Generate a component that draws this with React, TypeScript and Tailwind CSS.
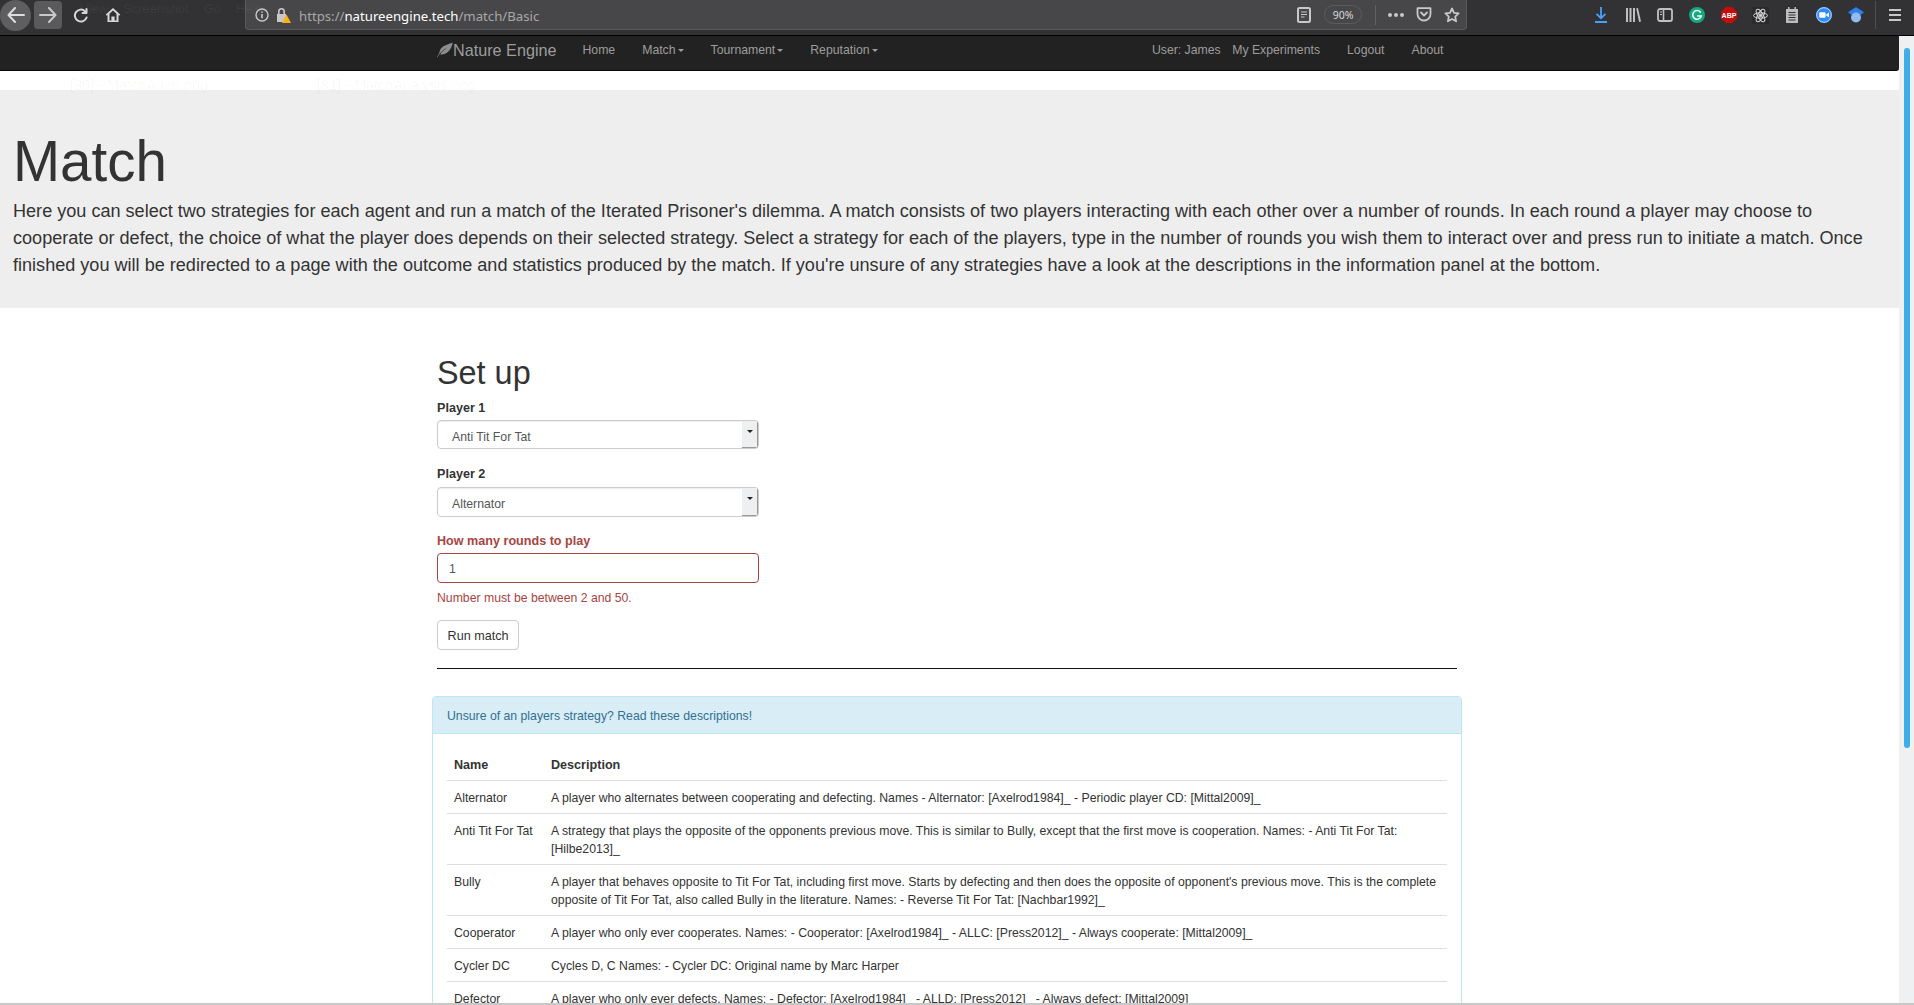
const rows = [
  ['Alternator', 'A player who alternates between cooperating and defecting. Names - Alternator: [Axelrod1984]_ - Periodic player CD: [Mittal2009]_'],
  ['Anti Tit For Tat', 'A strategy that plays the opposite of the opponents previous move. This is similar to Bully, except that the first move is cooperation. Names: - Anti Tit For Tat: [Hilbe2013]_'],
  ['Bully', "A player that behaves opposite to Tit For Tat, including first move. Starts by defecting and then does the opposite of opponent's previous move. This is the complete opposite of Tit For Tat, also called Bully in the literature. Names: - Reverse Tit For Tat: [Nachbar1992]_"],
  ['Cooperator', 'A player who only ever cooperates. Names: - Cooperator: [Axelrod1984]_ - ALLC: [Press2012]_ - Always cooperate: [Mittal2009]_'],
  ['Cycler DC', 'Cycles D, C Names: - Cycler DC: Original name by Marc Harper'],
  ['Defector', 'A player who only ever defects. Names: - Defector: [Axelrod1984]_ - ALLD: [Press2012]_ - Always defect: [Mittal2009]_'],
];

function Caret({ className = '' }: { className?: string }) {
  return <span className={`inline-block w-0 h-0 border-x-[3.5px] border-x-transparent border-t-[3.5px] ${className}`} />;
}

function FakeSelect({ value, height, pad }: { value: string; height: string; pad: string }) {
  return (
    <div className={`w-[322px] ${height} flex items-stretch bg-white border border-[#ccc] rounded-[4px] overflow-hidden shadow-[inset_0_1px_1px_rgba(0,0,0,0.075)]`}>
      <div className={`flex-1 flex items-center pl-[14px] ${pad} text-[#555]`}>{value}</div>
      <div className="w-[16px] flex items-center justify-center bg-[#eeeff1] border-r border-b border-[#999]">
        <Caret className="border-t-[#222] mb-[6px]" />
      </div>
    </div>
  );
}

function NavLink({ children, caret }: { children: string; caret?: boolean }) {
  return (
    <span className="px-[13.5px] flex items-center gap-[2px] text-[#9d9d9d]">
      {children}
      {caret && <Caret className="border-t-[#9d9d9d] mt-[1px]" />}
    </span>
  );
}

export default function App() {
  return (
    <div className="relative h-[1005px] w-[1914px] overflow-hidden flex flex-col bg-white text-[12.25px] leading-[18px] text-[#333] font-['Liberation_Sans',Arial,sans-serif]">
      {/* firefox toolbar */}
      <div className="h-[36px] shrink-0 flex items-start bg-[#323234] border-b border-black relative">
        {/* window menu showing through */}
        <div className="absolute left-[80px] top-0 flex gap-[15px] text-[13px] text-white/[0.06] pointer-events-none">
          <span>View</span>
          <span>Screenshot</span>
          <span>Go</span>
          <span>Help</span>
        </div>
        <div className="flex items-center h-[30px] w-[245px] shrink-0 text-[#d6d6d8]">
          <div className="w-[31px] h-[31px] rounded-full bg-[#5e5e60] flex items-center justify-center">
            <svg width="18" height="16" viewBox="0 0 18 16" fill="none" stroke="#dcdcde" strokeWidth="2" strokeLinecap="round" strokeLinejoin="round"><path d="M8 1 1.5 8 8 15M2 8h15" /></svg>
          </div>
          <div className="ml-[3px] w-[28px] h-[28px] rounded-[4px] bg-[#5a5a5c] flex items-center justify-center">
            <svg width="18" height="16" viewBox="0 0 18 16" fill="none" stroke="#c8c8ca" strokeWidth="2" strokeLinecap="round" strokeLinejoin="round"><path d="M10 1l6.5 7L10 15M16 8H1" /></svg>
          </div>
          <svg width="16" height="15" viewBox="0 0 16 15" fill="none" stroke="#d6d6d8" strokeWidth="2" strokeLinecap="round" className="ml-[11px]">
            <path d="M13.6 9.5A6 6 0 1 1 12 3.2" />
            <path d="M13.5 1v4h-4" strokeLinejoin="round" />
          </svg>
          <svg width="16" height="16" viewBox="0 0 16 16" className="ml-[16px]">
            <path d="M8 1 .8 7.6l1 1.1L2.5 8v7h11V8l.7.7 1-1.1L8 1Zm-3.5 5.8L8 3.6l3.5 3.2V13.4H9.6V9.6H6.4v3.8H4.5V6.8Z" fill="#d6d6d8" />
          </svg>
        </div>
        <div className="w-[1222px] h-[30px] shrink-0 flex items-center bg-[#474749] rounded-b-[4px] border border-t-0 border-[#5a5a5c] text-[#d0d0d2]">
          <svg width="14" height="14" viewBox="0 0 14 14" fill="none" stroke="#c8c8ca" className="ml-[9px]">
            <circle cx="7" cy="7" r="6" strokeWidth="1.4" />
            <path d="M7 6v4.2M7 3.4v1.4" strokeWidth="1.6" />
          </svg>
          <svg width="15" height="16" viewBox="0 0 15 16" className="ml-[7px]">
            <path d="M2 7V4.5a3.5 3.5 0 0 1 7 0V7h1v8H1V7h1Zm1.6 0h3.8V4.5a1.9 1.9 0 0 0-3.8 0V7Z" fill="#c8c8ca" />
            <path d="M10.5 7.5 15 16H6l4.5-8.5Z" fill="#f9b21a" />
          </svg>
          <span className="ml-[8px] pt-[2px] text-[13.2px] font-['Noto_Sans',sans-serif] text-[#a8a8aa]">
            https://<span className="text-white">natureengine.tech</span>/match/Basic
          </span>
          <div className="flex-1" />
          <svg width="14" height="16" viewBox="0 0 14 16" fill="none" stroke="#c8c8ca">
            <rect x="1" y="1" width="12" height="14" rx="1.5" strokeWidth="2" />
            <path d="M4 5h6M4 7.5h6M4 10h3.5" strokeWidth="1.2" />
          </svg>
          <span className="ml-[13px] w-[38px] h-[19px] rounded-full border border-[#5c5c5e] flex items-center justify-center text-[10.5px] font-['Noto_Sans',sans-serif] text-[#d8d8da]">90%</span>
          <span className="ml-[13px] w-px h-[20px] bg-[#626264]" />
          <svg width="16" height="4" viewBox="0 0 16 4" fill="#c8c8ca" className="ml-[12px]">
            <circle cx="2" cy="2" r="2" /><circle cx="8" cy="2" r="2" /><circle cx="14" cy="2" r="2" />
          </svg>
          <svg width="16" height="15" viewBox="0 0 16 15" fill="none" stroke="#c8c8ca" strokeWidth="1.8" strokeLinecap="round" strokeLinejoin="round" className="ml-[12px]">
            <path d="M1.5 1.2h13V7a6.5 6.5 0 0 1-13 0V1.2Z" />
            <path d="M5 5.500l3 3 3-3" />
          </svg>
          <svg width="16" height="16" viewBox="0 0 16 16" fill="none" stroke="#c8c8ca" strokeWidth="1.8" strokeLinejoin="round" className="ml-[12px] mr-[6px]">
            <path d="M8 1.5l2 4.3 4.6.6-3.4 3.2.9 4.7L8 12l-4.1 2.3.9-4.7-3.4-3.2 4.6-.6L8 1.5Z" />
          </svg>
        </div>
        <div className="flex-1 h-[30px] flex items-center text-[#d0d0d2] pl-[128px]">
          <svg width="12" height="16" viewBox="0 0 12 16" fill="none" stroke="#45a1ff" strokeWidth="1.8">
            <path d="M6 0v11M1.500 6.800 6 11.200l4.500-4.400" /><path d="M0 15h12" strokeWidth="2" />
          </svg>
          <svg width="15" height="14" viewBox="0 0 15 14" fill="#c0c0c2" className="ml-[19px]">
            <rect x="0" y="0" width="2" height="14" /><rect x="3.5" y="0" width="2" height="14" /><rect x="7" y="0" width="2" height="14" />
            <path d="M10.2.5 12 0l3 13.5-1.9.5L10.2.5Z" />
          </svg>
          <svg width="16" height="14" viewBox="0 0 16 14" fill="none" stroke="#c0c0c2" className="ml-[16px]">
            <rect x="1" y="1" width="14" height="12" rx="2" strokeWidth="1.8" />
            <path d="M6.500 1v12" strokeWidth="1.6" /><path d="M3 4h2M3 6.500h2" strokeWidth="1" />
          </svg>
          <svg width="16" height="16" viewBox="0 0 16 16" fill="none" className="ml-[16px]">
            <circle cx="8" cy="8" r="8" fill="#15a97f" />
            <path d="M11.400 5.200A4.300 4.300 0 1 0 12.200 9H8.800" stroke="#fff" strokeWidth="1.5" strokeLinecap="round" />
          </svg>
          <svg width="16" height="16" viewBox="0 0 16 16" className="ml-[16px]">
            <path d="M4.700 0h6.600L16 4.700v6.600L11.300 16H4.700L0 11.300V4.700L4.700 0Z" fill="#c60b0b" />
            <text x="8" y="10.8" textAnchor="middle" fontSize="7" fontWeight="700" fill="#fff" fontFamily="Liberation Sans">ABP</text>
          </svg>
          <span className="ml-[15px] w-[17px] h-[17px] bg-[#2a2a2c] flex items-center justify-center">
            <svg width="15" height="15" viewBox="0 0 15 15" fill="none" stroke="#dcdcde" strokeWidth="1">
              <ellipse cx="7.5" cy="7.5" rx="7" ry="2.7" />
              <ellipse cx="7.5" cy="7.5" rx="7" ry="2.7" transform="rotate(60 7.5 7.5)" />
              <ellipse cx="7.5" cy="7.5" rx="7" ry="2.7" transform="rotate(120 7.5 7.5)" />
              <circle cx="7.5" cy="7.5" r="1.3" fill="#dcdcde" />
            </svg>
          </span>
          <svg width="12" height="16" viewBox="0 0 12 16" className="ml-[17px]">
            <path d="M0 2h2V0h1.500v2h5V0H10v2h2v14H0V2Z" fill="#bdbdbf" />
            <path d="M2.500 5.500h7M2.500 8h7M2.500 10.500h7M2.500 13h7" stroke="#323234" strokeWidth="1" />
          </svg>
          <svg width="16" height="16" viewBox="0 0 16 16" className="ml-[18px]">
            <circle cx="8" cy="8" r="8" fill="#2d8cff" />
            <circle cx="8" cy="8" r="7.3" fill="none" stroke="#d8e8ff" strokeWidth="0.8" />
            <rect x="3.2" y="5.2" width="6.4" height="5.6" rx="1.2" fill="#fff" />
            <path d="M10.200 7.400 13 5.400v5.200L10.200 8.600Z" fill="#fff" />
          </svg>
          <svg width="16" height="16" viewBox="0 0 16 16" className="ml-[16px]">
            <path d="M8 0l8 5.200-3 2.600H3L0 5.200 8 0Z" fill="#2f7fe8" />
            <circle cx="8" cy="10.5" r="5" fill="#8fbcf5" />
          </svg>
          <span className="ml-[11px] w-px h-[28px] bg-[#4e4e50]" />
          <svg width="12" height="12" viewBox="0 0 12 12" fill="#c8c8ca" className="ml-[13px]">
            <rect y="0" width="12" height="2" /><rect y="5" width="12" height="2" /><rect y="10" width="12" height="2" />
          </svg>
        </div>
      </div>

      <div className="flex-1 min-h-0 flex">
        <div className="relative flex-1 min-w-0 overflow-hidden">
          {/* navbar */}
          <div className="h-[35px] flex items-center pb-[6px] bg-[#222] border-b border-[#080808] rounded-br-[3px] pl-[437px]">
            <div className="w-[1020px] flex items-center">
              <svg width="16" height="16" viewBox="0 0 16 16" className="shrink-0 mt-[-1px]">
                <path d="M.4 15.400C2 12 5.500 8 10.500 5.200 7 7.800 4.600 10.300 3.200 12.400c5 1 11-3 12.600-11.900C10.500 3 3 3.300 2.300 11L0 15Z" fill="#8d8d8d" />
              </svg>
              <span className="text-[16.2px] text-[#9d9d9d]">Nature Engine</span>
              <div className="flex ml-[12.5px]">
                <NavLink>Home</NavLink>
                <NavLink caret>Match</NavLink>
                <NavLink caret>Tournament</NavLink>
                <NavLink caret>Reputation</NavLink>
              </div>
              <div className="flex-1" />
              <span className="text-[#9d9d9d] mr-[-2px]">User: James</span>
              <NavLink>My Experiments</NavLink>
              <NavLink>Logout</NavLink>
              <NavLink>About</NavLink>
            </div>
          </div>

          {/* other window showing through */}
          <div className="absolute left-[70px] top-[40px] flex gap-[109px] text-[14.5px] text-black/[0.035] pointer-events-none">
            <span>[80] - MatchAnim.png</span>
            <span>[81] - MatchAnalysis.png</span>
          </div>

          {/* jumbotron */}
          <div className="mt-[19px] h-[218px] bg-[#eee] pl-[13px] pr-[20px] pt-[41px]">
            <h1 className="text-[56.5px] leading-[62px]">Match</h1>
            <p className="mt-[5px] text-[18.08px] leading-[27px]">
              Here you can select two strategies for each agent and run a match of the Iterated Prisoner's dilemma. A match consists of two players interacting with each other over a number of rounds. In each round a player may choose to cooperate or defect, the choice of what the player does depends on their selected strategy. Select a strategy for each of the players, type in the number of rounds you wish them to interact over and press run to initiate a match. Once finished you will be redirected to a page with the outcome and statistics produced by the match. If you're unsure of any strategies have a look at the descriptions in the information panel at the bottom.
            </p>
          </div>

          <div className="ml-[437px] w-[1020px]">
            <h2 className="mt-[47px] text-[32.4px] leading-[36px]">Set up</h2>

            <label className="block mt-[8px] mb-[3px] text-[12.6px] font-bold">Player 1</label>
            <FakeSelect value="Anti Tit For Tat" height="h-[29px]" pad="pt-[4px]" />

            <label className="block mt-[16px] mb-[4px] text-[12.6px] font-bold">Player 2</label>
            <FakeSelect value="Alternator" height="h-[30px]" pad="pt-[3px]" />

            <label className="block mt-[15px] mb-[3px] text-[12.6px] font-bold text-[#a94442]">How many rounds to play</label>
            <div className="w-[322px] h-[30px] flex items-center pl-[11px] pt-[1px] bg-white border border-[#a94442] rounded-[4px] text-[#555]">1</div>
            <p className="mt-[6px] text-[#a94442]">Number must be between 2 and 50.</p>

            <button className="block mt-[13px] w-[82px] h-[30px] pt-[1px] text-[12.6px] bg-white border border-[#ccc] rounded-[4px]">Run match</button>

            <hr className="mt-[18px] border-t border-[#111]" />
          </div>

          {/* strategy panel */}
          <div className="mt-[27px] ml-[432px] w-[1030px] bg-white border border-[#bce8f1] rounded-t-[4px]">
            <div className="h-[37px] flex items-center pl-[14px] pt-[2px] bg-[#d9edf7] border-b border-[#bce8f1] text-[#31708f] rounded-t-[3px]">
              Unsure of an players strategy? Read these descriptions!
            </div>
            <div className="px-[14px] pt-[14px]">
              <table className="w-full border-collapse">
                <thead>
                  <tr>
                    <th className="w-[97px] pl-[7px] pr-0 pt-[8px] pb-[6px] text-left text-[12.6px] font-bold border-b border-[#ddd]">Name</th>
                    <th className="pl-[7px] pr-[7px] pt-[8px] pb-[6px] text-left text-[12.6px] font-bold border-b border-[#ddd]">Description</th>
                  </tr>
                </thead>
                <tbody>
                  {rows.map(([name, desc]) => (
                    <tr key={name} className="border-b border-[#ddd] align-top">
                      <td className="pl-[7px] pr-0 pt-[8px] pb-[6px] whitespace-nowrap">{name}</td>
                      <td className="pl-[7px] pr-[7px] pt-[8px] pb-[6px]">{desc}</td>
                    </tr>
                  ))}
                </tbody>
              </table>
            </div>
          </div>
        </div>

        {/* scrollbar */}
        <div className="w-[15px] shrink-0 bg-[#eff0f1] pl-[5px] pt-[12px]">
          <div className="w-[6px] h-[700px] rounded-full bg-[#3daee9]" />
        </div>
      </div>
      <div className="h-[2px] shrink-0 bg-[#c8c8c8]" />
    </div>
  );
}
